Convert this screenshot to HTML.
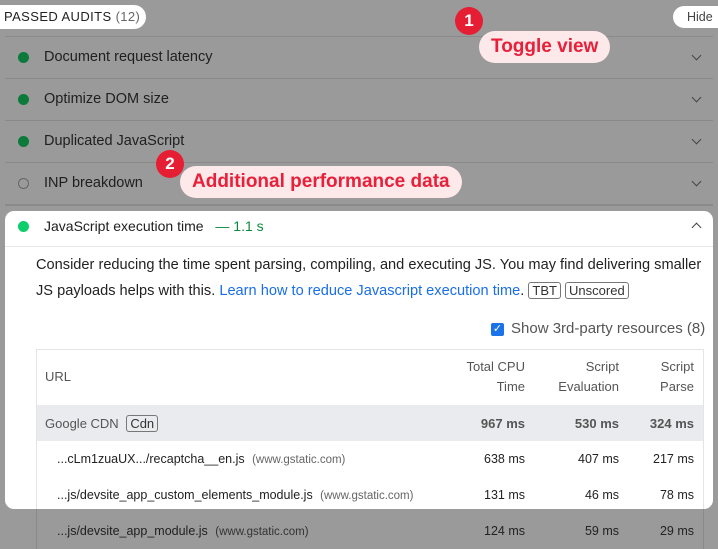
<!DOCTYPE html>
<html><head><meta charset="utf-8"><style>
*{margin:0;padding:0;box-sizing:border-box}
body{width:718px;height:549px;overflow:hidden;background:#9a9a9a;font-family:"Liberation Sans",sans-serif;color:#1f1f1f;position:relative}
.a{position:absolute;white-space:nowrap}
.sep{position:absolute;left:5px;width:708px;height:1px;background:#8a8a8a}
.row{position:absolute;left:44px;font-size:14.5px;color:#202020}
.dot{position:absolute;left:18px;width:11px;height:11px;border-radius:50%;background:#0b7a3b}
.chev{position:absolute;left:693px;width:7px;height:7px;border-right:1.5px solid #444;border-bottom:1.5px solid #444;transform:rotate(45deg)}
.badge{display:inline-block;border:1px solid #777;border-radius:3px;padding:0 3px;font-size:13px;line-height:15px;color:#333}
.num{position:absolute;width:90px;text-align:right;font-size:12.5px;color:#222}
.tag{position:absolute;background:#fde8ea;color:#e8203a;font-weight:bold;font-size:19px;border-radius:16px;padding:0 12px;height:32px;line-height:32px}
.circ{position:absolute;width:28px;height:28px;border-radius:50%;background:#e61e34;color:#fff;font-weight:bold;font-size:17px;text-align:center;line-height:28px}
</style></head><body>
<div class="a" style="left:0;top:5px;height:24px;width:146px;background:#fff;border-radius:0 12px 12px 0;font-size:13px;letter-spacing:0.4px;line-height:24px;padding-left:4px;color:#222">PASSED AUDITS <span style="color:#666">(12)</span></div>
<div class="a" style="left:673px;top:6px;height:22px;width:45px;background:#fff;border-radius:11px 0 0 11px;font-size:12.5px;line-height:22px;padding-left:14px;color:#444">Hide</div>
<div class="sep" style="top:36px"></div>
<div class="sep" style="top:78px"></div>
<div class="sep" style="top:120px"></div>
<div class="sep" style="top:162px"></div>
<div class="sep" style="top:204px;height:2px"></div>

<div class="dot" style="top:52px"></div><div class="row a" style="top:49px">Document request latency</div><div class="chev" style="top:52px"></div>
<div class="dot" style="top:94px"></div><div class="row a" style="top:91px">Optimize DOM size</div><div class="chev" style="top:94px"></div>
<div class="dot" style="top:136px"></div><div class="row a" style="top:133px">Duplicated JavaScript</div><div class="chev" style="top:136px"></div>
<div class="dot" style="top:178px;background:none;border:1.5px solid #666"></div><div class="row a" style="top:175px">INP breakdown</div><div class="chev" style="top:178px"></div>

<div class="a" style="left:5px;top:211px;width:708px;height:298px;background:#fff;border-radius:9px"></div>
<div class="dot" style="top:221px;background:#0cce6b"></div>
<div class="row a" style="top:218px;font-size:14px">JavaScript execution time <span style="color:#0a8a3a;margin-left:8px">— 1.1 s</span></div>
<div class="chev" style="top:224px;transform:rotate(225deg)"></div>
<div class="a" style="left:5px;top:246px;width:708px;height:1px;background:#e8e8e8"></div>
<div class="a" style="left:36px;top:257px;font-size:14.6px;color:#222">Consider reducing the time spent parsing, compiling, and executing JS. You may find delivering smaller</div>
<div class="a" style="left:36px;top:282px;font-size:14.6px;color:#222">JS payloads helps with this. <span style="color:#1a6ee8">Learn how to reduce Javascript execution time</span>. <span class="badge">TBT</span> <span class="badge">Unscored</span></div>
<div class="a" style="left:491px;top:323px;width:13px;height:13px;background:#1a73e8;border-radius:2px;color:#fff;font-size:11px;line-height:13px;text-align:center">✓</div>
<div class="a" style="left:511px;top:320px;font-size:15px;color:#555">Show 3rd-party resources (8)</div>

<div class="a" style="left:36px;top:349px;width:668px;height:200px;border:1px solid #e4e4e4;border-bottom:none"></div>
<div class="a" style="left:45px;top:369px;font-size:13px;color:#555">URL</div>
<div class="num" style="left:435px;top:357px;line-height:20px;color:#555;font-size:13px">Total CPU<br>Time</div>
<div class="num" style="left:529px;top:357px;line-height:20px;color:#555;font-size:13px">Script<br>Evaluation</div>
<div class="num" style="left:604px;top:357px;line-height:20px;color:#555;font-size:13px">Script<br>Parse</div>
<div class="a" style="left:37px;top:405px;width:666px;height:36px;background:#e9ebee"></div>
<div class="a" style="left:45px;top:415px;font-size:13px;color:#555">Google CDN <span class="badge" style="margin-left:4px">Cdn</span></div>
<div class="num" style="left:435px;top:416px;font-weight:bold;color:#555;font-size:13px">967 ms</div>
<div class="num" style="left:529px;top:416px;font-weight:bold;color:#555;font-size:13px">530 ms</div>
<div class="num" style="left:604px;top:416px;font-weight:bold;color:#555;font-size:13px">324 ms</div>

<div class="a" style="left:57px;top:452px;font-size:12.5px">...cLm1zuaUX.../recaptcha__en.js <span style="font-size:11.5px;color:#666;margin-left:4px">(www.gstatic.com)</span></div>
<div class="num" style="left:435px;top:452px">638 ms</div><div class="num" style="left:529px;top:452px">407 ms</div><div class="num" style="left:604px;top:452px">217 ms</div>
<div class="a" style="left:57px;top:488px;font-size:12.5px">...js/devsite_app_custom_elements_module.js <span style="font-size:11.5px;color:#666;margin-left:4px">(www.gstatic.com)</span></div>
<div class="num" style="left:435px;top:488px">131 ms</div><div class="num" style="left:529px;top:488px">46 ms</div><div class="num" style="left:604px;top:488px">78 ms</div>
<div class="a" style="left:57px;top:524px;font-size:12.5px">...js/devsite_app_module.js <span style="font-size:11.5px;color:#333;margin-left:4px">(www.gstatic.com)</span></div>
<div class="num" style="left:435px;top:524px">124 ms</div><div class="num" style="left:529px;top:524px">59 ms</div><div class="num" style="left:604px;top:524px">29 ms</div>
<div class="a" style="left:36px;top:509px;width:1px;height:40px;background:#8a8a8a"></div>
<div class="a" style="left:703px;top:509px;width:1px;height:40px;background:#8a8a8a"></div>

<div class="circ" style="left:455px;top:7px">1</div>
<div class="tag" style="left:479px;top:31px">Toggle view</div>
<div class="circ" style="left:156px;top:150px">2</div>
<div class="tag" style="left:180px;top:166px">Additional performance data</div>
</body></html>
